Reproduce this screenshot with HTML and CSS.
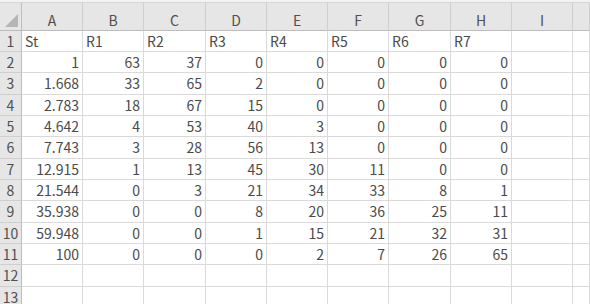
FILE: index.html
```html
<!DOCTYPE html>
<html lang="ja">

<head>
    <meta charset="UTF-8">
    <title>Sheet1</title>
    <link rel="stylesheet" href="styles.css">
</head>

<body>
    <div class="topbar"></div>
    <div class="sheet">
        <div class="row head">
            <div class="corner"><span class="tri"></span></div>
            <div>A</div><div>B</div><div>C</div><div>D</div><div>E</div>
            <div>F</div><div>G</div><div>H</div><div>I</div><div></div>
        </div>
        <div class="row">
            <div class="num">1</div>
            <div class="txt">St</div><div class="txt">R1</div><div class="txt">R2</div><div class="txt">R3</div>
            <div class="txt">R4</div><div class="txt">R5</div><div class="txt">R6</div><div class="txt">R7</div>
            <div></div><div></div>
        </div>
        <div class="row">
            <div class="num">2</div>
            <div>1</div><div>63</div><div>37</div><div>0</div><div>0</div><div>0</div><div>0</div><div>0</div>
            <div></div><div></div>
        </div>
        <div class="row tall">
            <div class="num">3</div>
            <div>1.668</div><div>33</div><div>65</div><div>2</div><div>0</div><div>0</div><div>0</div><div>0</div>
            <div></div><div></div>
        </div>
        <div class="row">
            <div class="num">4</div>
            <div>2.783</div><div>18</div><div>67</div><div>15</div><div>0</div><div>0</div><div>0</div><div>0</div>
            <div></div><div></div>
        </div>
        <div class="row">
            <div class="num">5</div>
            <div>4.642</div><div>4</div><div>53</div><div>40</div><div>3</div><div>0</div><div>0</div><div>0</div>
            <div></div><div></div>
        </div>
        <div class="row tall">
            <div class="num">6</div>
            <div>7.743</div><div>3</div><div>28</div><div>56</div><div>13</div><div>0</div><div>0</div><div>0</div>
            <div></div><div></div>
        </div>
        <div class="row">
            <div class="num">7</div>
            <div>12.915</div><div>1</div><div>13</div><div>45</div><div>30</div><div>11</div><div>0</div><div>0</div>
            <div></div><div></div>
        </div>
        <div class="row">
            <div class="num">8</div>
            <div>21.544</div><div>0</div><div>3</div><div>21</div><div>34</div><div>33</div><div>8</div><div>1</div>
            <div></div><div></div>
        </div>
        <div class="row tall">
            <div class="num">9</div>
            <div>35.938</div><div>0</div><div>0</div><div>8</div><div>20</div><div>36</div><div>25</div><div>11</div>
            <div></div><div></div>
        </div>
        <div class="row">
            <div class="num">10</div>
            <div>59.948</div><div>0</div><div>0</div><div>1</div><div>15</div><div>21</div><div>32</div><div>31</div>
            <div></div><div></div>
        </div>
        <div class="row">
            <div class="num">11</div>
            <div>100</div><div>0</div><div>0</div><div>0</div><div>2</div><div>7</div><div>26</div><div>65</div>
            <div></div><div></div>
        </div>
        <div class="row tall">
            <div class="num">12</div>
            <div></div><div></div><div></div><div></div><div></div><div></div><div></div><div></div>
            <div></div><div></div>
        </div>
        <div class="row">
            <div class="num">13</div>
            <div></div><div></div><div></div><div></div><div></div><div></div><div></div><div></div>
            <div></div><div></div>
        </div>
    </div>
</body>

</html>
```

FILE: styles.css
```css
body {
    margin: 0;
    background: #ffffff;
    font-family: "Noto Sans CJK JP", "Noto Sans", sans-serif;
    font-size: 14px;
    color: #4a4a4a;
    overflow: hidden;
}

.topbar {
    height: 2px;
    background: #f3f3f3;
    border-bottom: 1px solid #d6d6d6;
}

.row {
    display: grid;
    grid-template-columns: 22px 61px 61px 62px 61px 61px 61px 62px 61px 61px 1fr;
    height: 21px;
}

.row.tall {
    height: 22px;
}

.row > div {
    box-sizing: border-box;
    border-right: 1px solid #dadada;
    border-bottom: 1px solid #dadada;
    text-align: right;
    padding: 0 3px;
    line-height: 20px;
    white-space: nowrap;
    overflow: hidden;
}

.row > .txt {
    text-align: left;
}

.row > .num {
    background: #e6e6e6;
    color: #505050;
    text-align: center;
    padding: 0;
    border-right-color: #bdbdbd;
    border-bottom-color: #cfcfcf;
}

.head {
    height: 28px;
    background: #e6e6e6;
}

.head > div {
    text-align: center;
    color: #505050;
    line-height: 34px;
    border-right-color: #cfcfcf;
    border-bottom-color: #bdbdbd;
}

.head > .corner {
    position: relative;
    border-right-color: #bdbdbd;
}

.tri {
    position: absolute;
    right: 3px;
    bottom: 3px;
    width: 0;
    height: 0;
    border-left: 13px solid transparent;
    border-bottom: 13px solid #b5b5b5;
}
```
